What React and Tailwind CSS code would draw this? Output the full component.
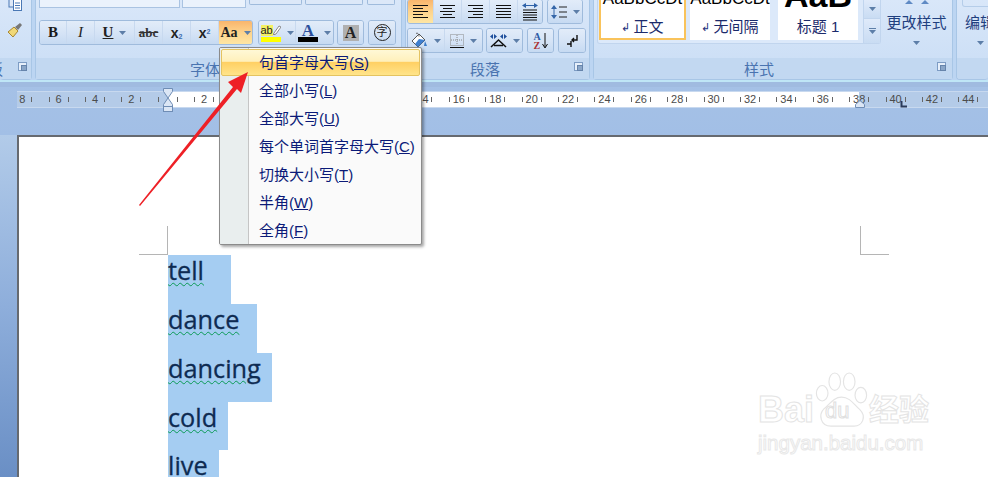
import React from "react";

const cjk = { fontFamily: '"Liberation Sans","Noto Sans CJK SC",sans-serif' };
const serif = { fontFamily: '"Liberation Serif",serif' };
const sans = { fontFamily: '"Liberation Sans",sans-serif' };
const groupBody = "bg-gradient-to-b from-[#d9e7f9] to-[#c9ddf5]";
const labelRow = "flex h-[21px] items-center justify-between bg-[#c2d8f1] text-[15px] text-[#4a74b0]";

const Caret = ({ className = "" }) => (
  <svg width="7" height="4" viewBox="0 0 7 4" className={`shrink-0 ${className}`}><path d="M0 0h7L3.500 4z" fill="#5d7ea8" /></svg>
);
const Launcher = () => (
  <svg width="9" height="9" viewBox="0 0 9 9" className="-mt-[4px] shrink-0">
    <rect x=".5" y=".5" width="8" height="8" fill="#e6effa" stroke="#7d9cc4" />
    <rect x="3.500" y="3.500" width="5" height="5" fill="#8aa6c8" stroke="#6684ab" />
  </svg>
);
const Seg = ({ w, hot, children, last }) => (
  <div
    className={`flex h-full items-center justify-center gap-[6px] ${hot ? "bg-gradient-to-b from-[#f9b56c] via-[#fdd38c] to-[#fee6a3]" : "bg-gradient-to-b from-[#e2ecf9] via-[#d6e4f6] to-[#c6daf2]"} ${last ? "" : "border-r border-[#c8d9ef]"}`}
    style={{ width: w }}
  >
    {children}
  </div>
);
const Group = ({ w, children, className = "" }) => (
  <div className={`flex h-[25px] shrink-0 overflow-hidden rounded-[3px] border border-[#9fbbdc] ${className}`} style={{ width: w }}>{children}</div>
);
const Lines = ({ kind }) => {
  const a = kind === "left" ? [0, 10] : kind === "right" ? [5, 15] : kind === "center" ? [3, 12] : [0, 15];
  return (
    <svg width="15" height="13" viewBox="0 0 15 13">
      {[0, 1, 2, 3, 4].map((i) => {
        const r = i % 2 ? a : [0, 15];
        return <path key={i} d={`M${r[0]} ${i * 3 + .5}H${r[1]}`} stroke="#111" />;
      })}
    </svg>
  );
};

const FontGroup = () => (
  <div className={`flex h-full w-[367px] shrink-0 flex-col rounded-b-[4px] border-x border-b border-[#a8c6e6] ${groupBody}`}>
    <div className="flex h-[58px] flex-col px-[2px]">
      <div className="flex h-[8px] pl-[1px]">
        <div className="h-full w-[141px] border border-t-0 border-[#a9c3e2] bg-[#eaf2fc]" />
        <div className="ml-[2px] h-full w-[64px] border border-t-0 border-[#a9c3e2] bg-[#eaf2fc]" />
        <div className="ml-[3px] h-[5px] w-[53px] rounded-b-[2px] border border-t-0 border-[#9fbbdc] bg-[#dce8f8]" />
        <div className="ml-[3px] h-[5px] w-[58px] rounded-b-[2px] border border-t-0 border-[#9fbbdc] bg-[#dce8f8]" />
        <div className="ml-[4px] h-[5px] w-[28px] rounded-b-[2px] border border-t-0 border-[#9fbbdc] bg-[#dce8f8]" />
      </div>
      <div className="mt-[12px] flex items-center pl-[1px]">
        <Group w={214}>
          <Seg w={27}><span className="text-[15px] font-bold leading-none text-[#1a1a1a]" style={serif}>B</span></Seg>
          <Seg w={28}><span className="text-[15px] italic leading-none text-[#222]" style={serif}>I</span></Seg>
          <Seg w={40}><span className="text-[15px] font-bold leading-none text-[#222] underline" style={serif}>U</span><Caret /></Seg>
          <Seg w={28}><span className="text-[13px] font-bold leading-none text-[#333] line-through" style={serif}>abc</span></Seg>
          <Seg w={28}><span className="text-[14px] font-bold leading-none text-[#222]" style={sans}>x<sub className="text-[7px] text-[#3b6db0]">2</sub></span></Seg>
          <Seg w={28}><span className="text-[14px] font-bold leading-none text-[#222]" style={sans}>x<sup className="text-[7px] text-[#3b6db0]">2</sup></span></Seg>
          <Seg w={33} hot last><span className="text-[14px] font-bold leading-none text-[#222]" style={serif}>Aa</span><Caret /></Seg>
        </Group>
        <Group w={76} className="ml-[5px]">
          <Seg w={38}>
            <div className="flex w-[20px] flex-col items-start">
              <div className="flex h-[13px] items-center">
                <span className="bg-[#f3f062] text-[11px] leading-[11px] text-[#222]" style={sans}>ab</span>
                <svg width="8" height="10" viewBox="0 0 8 10"><path d="M1 8l5-7 2 1-5 7-3 1z" fill="#fff" stroke="#8a8a8a" /></svg>
              </div>
              <div className="h-[5px] w-[20px] bg-[#ffff00]" />
            </div>
            <Caret />
          </Seg>
          <Seg w={38} last>
            <div className="flex flex-col items-center">
              <span className="h-[13px] text-[17px] font-bold leading-[14px] text-[#2c4f9c]" style={serif}>A</span>
              <div className="h-[5px] w-[20px] bg-black" />
            </div>
            <Caret />
          </Seg>
        </Group>
        <Group w={27} className="ml-[3px]"><Seg w={27} last><span className="flex h-[16px] w-[16px] items-center justify-center bg-[#b0b0b0] text-[16px] font-bold leading-none text-[#222]" style={serif}>A</span></Seg></Group>
        <Group w={28} className="ml-[4px]"><Seg w={28} last><span className="flex h-[17px] w-[17px] items-center justify-center rounded-full border border-[#222] text-[11px] leading-none text-[#222]" style={cjk}>字</span></Seg></Group>
      </div>
    </div>
    <div className={`${labelRow} pl-[154px] pr-[6px]`} style={cjk}>
      <span className="mt-[4px]">字体</span>
      <Launcher />
    </div>
  </div>
);

const ParaGroup = () => (
  <div className={`flex h-full w-[185px] shrink-0 flex-col rounded-b-[4px] border-x border-b border-[#a8c6e6] ${groupBody}`}>
    <div className="flex h-[58px] flex-col gap-[4px] pl-[1px]">
      <div className="-mt-[1px] flex h-[25px]">
        <Group w={136}>
          <Seg w={26} hot><Lines kind="left" /></Seg>
          <Seg w={28}><Lines kind="center" /></Seg>
          <Seg w={28}><Lines kind="right" /></Seg>
          <Seg w={28}><Lines kind="full" /></Seg>
          <Seg w={24} last>
            <svg width="16" height="18" viewBox="0 0 16 18"><path d="M1 2.500h14" stroke="#2f62a8" /><path d="M4 0v5L0 2.500zM12 0v5l4-2.500z" fill="#2f62a8" /><path d="M1 7h14M1 9.500h14M1 12h14M1 14.500h14M1 17h14" stroke="#111" /></svg>
          </Seg>
        </Group>
        <Group w={36} className="ml-[4px]">
          <Seg w={36} last>
            <svg width="16" height="16" viewBox="0 0 16 16"><path d="M3 2v12" stroke="#3566a8" /><path d="M0 5l3-4 3 4zM0 11l3 4 3-4z" fill="#3566a8" /><path d="M8 3h8M8 8h8M8 13h8" stroke="#222" /></svg>
            <Caret />
          </Seg>
        </Group>
      </div>
      <div className="flex h-[25px]">
        <Group w={76}>
          <Seg w={38}>
            <svg width="17" height="17" viewBox="0 0 17 17"><path d="M1 9l7-7 6 6-7 7z" fill="#fff" stroke="#555" /><path d="M5 1.500c2-1 3 1 3 3" fill="none" stroke="#555" /><path d="M8 7l6 1-7 7-3-3z" fill="#3f7fcf" /><path d="M14 9l2 5h-3z" fill="#3a7bc8" /></svg>
            <Caret />
          </Seg>
          <Seg w={38} last>
            <svg width="14" height="14" viewBox="0 0 14 14"><rect x=".5" y=".5" width="13" height="11" fill="none" stroke="#888" strokeDasharray="1 1" /><path d="M7 1v10M1 6h12" stroke="#888" strokeDasharray="1 1" /><path d="M0 13.500h14" stroke="#111" /></svg>
            <Caret />
          </Seg>
        </Group>
        <Group w={37} className="ml-[3px]">
          <Seg w={37} last>
            <svg width="17" height="14" viewBox="0 0 17 14"><path d="M1 13L8.500 6 16 13M4 11.500h9" fill="none" stroke="#111" strokeWidth="1.500" /><path d="M0 2.500L3 0v5zM17 2.500L14 0v5zM7 2.500L4 0v5zM10 2.500L13 0v5z" fill="#1f4f9c" /></svg>
            <Caret />
          </Seg>
        </Group>
        <Group w={27} className="ml-[4px]">
          <Seg w={27} last>
            <div className="flex items-center gap-[1px]">
              <span className="flex flex-col text-[10px] font-bold leading-[9px]" style={serif}><span className="text-[#2d5aa5]">A</span><span className="text-[#a33]">Z</span></span>
              <svg width="6" height="16" viewBox="0 0 6 16"><path d="M3 0v14M.5 11L3 15l2.500-4" fill="none" stroke="#111" /></svg>
            </div>
          </Seg>
        </Group>
        <Group w={28} className="ml-[4px]">
          <Seg w={28} last>
            <svg width="13" height="14" viewBox="0 0 13 14"><path d="M11 1v5H6M8 4L6 6l2 2M1 10h4v3M5 7v3" fill="none" stroke="#111" strokeWidth="1.400" /></svg>
          </Seg>
        </Group>
      </div>
    </div>
    <div className={`${labelRow} pl-[64px] pr-[6px]`} style={cjk}>
      <span className="mt-[4px]">段落</span>
      <Launcher />
    </div>
  </div>
);

const StyleCard = ({ w, active, sample, sampleClass, label, mark, style, big }) => (
  <div className={`flex h-[40px] shrink-0 flex-col items-center overflow-hidden bg-white ${active ? "border-2 border-t-0 border-[#f9c35b]" : ""}`} style={{ width: w }}>
    <div className={`flex shrink-0 items-end whitespace-nowrap leading-none ${big ? "h-[12px]" : "h-[7px]"} ${sampleClass}`} style={style}>{sample}</div>
    <div className={`flex items-center gap-[3px] whitespace-nowrap text-[15px] leading-[18px] text-[#1b2a6b] ${big ? "mt-[6px]" : "mt-[11px]"}`} style={cjk}>
      {mark && <span className="text-[11px] text-[#22307a]">↲</span>}
      <span>{label}</span>
    </div>
  </div>
);

const StyleGroup = () => (
  <div className={`flex h-full w-[360px] shrink-0 flex-col rounded-b-[4px] border-x border-b border-[#a8c6e6] ${groupBody}`}>
    <div className="flex h-[58px] pl-[3px]">
      <div className="flex h-[44px] w-[284px] shrink-0 rounded-b-[3px] border-x border-b border-[#c1d5ee] bg-[#dce9fa] pl-[1px]">
        <StyleCard w={87} active sample="AaBbCcDt" sampleClass="text-[17px]" style={sans} label="正文" mark />
        <div className="ml-[4px]"><StyleCard w={80} sample="AaBbCcDt" sampleClass="text-[17px]" style={sans} label="无间隔" mark /></div>
        <div className="ml-[8px]"><StyleCard w={80} big sample="AaB" sampleClass="text-[34px] font-bold" style={sans} label="标题 1" /></div>
        <div className="ml-auto flex flex-col">
          <div className="flex h-[19px] w-[17px] items-center justify-center border-l border-b border-[#c1d5ee] bg-gradient-to-b from-[#dfeafa] to-[#c9dcf3]"><Caret /></div>
          <div className="flex h-[24px] w-[17px] flex-col items-center justify-center gap-[1px] border-l border-[#c1d5ee] bg-gradient-to-b from-[#dfeafa] to-[#c9dcf3]"><div className="h-[1px] w-[7px] bg-[#5d7ea8]" /><Caret /></div>
        </div>
      </div>
      <div className="flex flex-1 flex-col items-center text-[15px] leading-[20px] text-[#1f3f7f]" style={cjk}>
        <div className="flex h-[13px] gap-[8px]">
          <svg width="8" height="4" viewBox="0 0 8 4"><path d="M4 0l4 4H0z" fill="#5f8ac4" /></svg>
          <svg width="8" height="4" viewBox="0 0 8 4"><path d="M4 0l4 4H0z" fill="#5f8ac4" /></svg>
        </div>
        <span className="whitespace-nowrap">更改样式</span>
        <Caret className="mt-[8px]" />
      </div>
    </div>
    <div className={`${labelRow} pl-[150px] pr-[6px]`} style={cjk}>
      <span className="mt-[4px]">样式</span>
      <Launcher />
    </div>
  </div>
);

const Ruler = () => {
  const marks = Array.from({ length: 27 }, (_, i) => Math.abs(i - 4) * 2);
  return (
    <div className="relative ml-[17px] mt-[4px] flex h-[17px] overflow-hidden border-y border-[#c8d9ef]">
      <div className="w-[151px] bg-[#b4cbe8]" />
      <div className="w-[691px] bg-white" />
      <div className="flex-1 bg-[#b4cbe8]" />
      <div className="absolute left-[-13px] top-0 flex h-full">
        {marks.map((n, i) => (
          <div key={i} className="flex h-full w-[36.4px] shrink-0 items-center justify-center gap-[5px] text-[11px] leading-none text-[#4b4b4b]" style={sans}>
            <span className="h-[5px] w-[1px] shrink-0 bg-[#666]" />
            <span className="flex w-[8px] justify-center whitespace-nowrap">{n === 0 ? "" : n}</span>
            <span className="h-[5px] w-[1px] shrink-0 bg-[#666]" />
          </div>
        ))}
      </div>
    </div>
  );
};

const Watermark = () => (
  <div className="absolute left-[758px] top-[372px] flex flex-col">
    <div className="flex items-end">
      <span className="text-[36px] font-bold leading-[36px] text-white [-webkit-text-stroke:1px_#e4e4e4]" style={sans}>Bai</span>
      <div className="relative ml-[1px] h-[56px] w-[53px]">
        <svg width="53" height="56" viewBox="0 0 54 58" className="absolute bottom-0 left-0">
          <g fill="#fff" stroke="#e4e4e4" strokeWidth="1.200">
            <ellipse cx="7" cy="22" rx="6" ry="8" />
            <ellipse cx="20" cy="10" rx="6" ry="9" />
            <ellipse cx="35" cy="10" rx="6" ry="9" />
            <ellipse cx="47" cy="24" rx="6" ry="8" />
            <path d="M27 26c-8 0-12 7-18 12-6 6-4 18 7 18h24c9 0 13-10 6-17-6-5-10-13-19-13z" />
          </g>
        </svg>
        <span className="absolute bottom-[5px] left-[10px] text-[22px] leading-[24px] text-white [-webkit-text-stroke:1px_#e0e0e0]" style={sans}>du</span>
      </div>
      <span className="ml-[1px] text-[30px] font-bold leading-[36px] text-white [-webkit-text-stroke:1px_#e4e4e4]" style={cjk}>经验</span>
    </div>
    <span className="mt-[4px] text-[20.500px] leading-[22px] text-white [-webkit-text-stroke:1px_#e8e8e8]" style={sans}>jingyan.baidu.com</span>
  </div>
);

const words = [["tell", 63, 49], ["dance", 89, 49], ["dancing", 104, 49], ["cold", 60, 48], ["live", 51, 48]];
const items = [["全部小写", "L"], ["全部大写", "U"], ["每个单词首字母大写", "C"], ["切换大小写", "T"], ["半角", "W"], ["全角", "F"]];

export default function App() {
  return (
    <div className="relative h-[477px] w-[988px] overflow-hidden bg-[#9ab8e0]">
      <div className="flex h-[82px] gap-[3px] border-b-2 border-[#bfe6f6] bg-[#bcd5f2]">
        <div className={`flex h-full w-[32px] shrink-0 flex-col rounded-b-[4px] border-r border-b border-[#a8c6e6] ${groupBody}`}>
          <div className="flex h-[58px] flex-col items-center gap-[10px] pr-[1px]">
            <svg width="15" height="15" viewBox="0 0 15 15" className="-mt-[3px]"><rect x="1" y="-3" width="8" height="13" fill="#dfe9f7" stroke="#4a78b5" /><rect x="5.500" y="2.500" width="8" height="11" fill="#fff" stroke="#4a78b5" /><path d="M7 6h5M7 8.500h5M7 11h5" stroke="#4a78b5" /></svg>
            <svg width="16" height="16" viewBox="0 0 16 16"><path d="M1 10l6-5 4 4-5 6z" fill="#f0d878" stroke="#a8862f" /><path d="M8 5l5-4 2 2-4 5z" fill="#777" /></svg>
          </div>
          <div className={`${labelRow} pr-[4px]`} style={cjk}>
            <span className="-ml-[12px] mt-[4px]">板</span>
            <Launcher />
          </div>
        </div>
        <FontGroup />
        <ParaGroup />
        <StyleGroup />
        <div className={`min-w-0 flex-1 overflow-hidden rounded-b-[4px] border-l border-b border-[#a8c6e6] ${groupBody}`}>
          <div className="flex h-[58px] flex-col items-start pl-[8px] text-[15px] leading-[20px] text-[#1f3f7f]" style={cjk}>
            <div className="ml-[-3px] mb-[6px] h-[7px] w-[40px] shrink-0 rounded-b-[3px] border border-t-0 border-[#b5cde9]" />
            <span className="whitespace-nowrap">编辑</span>
            <Caret className="ml-[12px] mt-[8px]" />
          </div>
          <div className="h-[21px] bg-[#c2d8f1]" />
        </div>
      </div>

      <div className="h-[53px] bg-gradient-to-b from-[#a5c1e6] to-[#a2bfe6]">
        <div className="h-[5px] bg-[#a0bbe0]" />
        <Ruler />
      </div>

      <div className="flex h-[342px]">
        <div className="w-[17px] bg-gradient-to-b from-[#b2cbe9] via-[#8eaedb] to-[#6a8fc5]" />
        <div className="relative flex-1 border-l-2 border-t-2 border-[#666a70] bg-white">
          <div className="flex h-[118px] items-end justify-between pl-[120px] pr-[99px]">
            <div className="h-[29px] w-[29px] border-b border-r border-[#b5b5b5]" />
            <div className="h-[29px] w-[29px] border-b border-l border-[#b5b5b5]" />
          </div>
          <div className="flex flex-col items-start pl-[149px]">
            {words.map(([w, wd, h]) => (
              <div key={w} className="flex shrink-0 items-start bg-[#a5cdf2] text-[25.300px] text-[#0e2b52] [-webkit-text-stroke:0.3px_#0e2b52]" style={{ width: wd, height: h, fontFamily: '"Open Sans",sans-serif', lineHeight: "30px" }}>
                <span className="underline decoration-[#0a9a55] decoration-wavy decoration-1 underline-offset-[2px]">{w}</span>
              </div>
            ))}
          </div>
        </div>
      </div>

      <svg width="12" height="26" viewBox="0 0 12 26" className="absolute left-[162px] top-[87px]">
        <path d="M1.500 1.500h9v3L6 11 1.500 4.500z" fill="#dbe6f5" stroke="#6f8db5" />
        <path d="M6 11l4.500 6.500v2.500h-9v-2.500z" fill="#dbe6f5" stroke="#6f8db5" />
        <rect x="1.500" y="19.500" width="9" height="5" fill="#dbe6f5" stroke="#6f8db5" />
      </svg>
      <svg width="10" height="8" viewBox="0 0 10 8" className="absolute left-[855px] top-[100px]"><path d="M.5 7.500v-3L5 .5l4.500 4v3z" fill="#dbe6f5" stroke="#6f8db5" /></svg>
      <svg width="7" height="7" viewBox="0 0 7 7" className="absolute left-[900px] top-[101px]"><path d="M1.500 0v5.500H7" fill="none" stroke="#2a3a5a" strokeWidth="2" /></svg>

      <div className="absolute left-[219px] top-[47px] h-[198px] w-[203px] overflow-hidden rounded-[2px] border border-[#8b8b8b] bg-[#fafafa] shadow-[2px_2px_3px_rgba(0,0,0,0.35)]" style={cjk}>
        <div className="flex h-full">
          <div className="w-[29px] border-r border-[#c5c5c5] bg-[#e9eeee]" />
        </div>
        <div className="absolute inset-0 flex flex-col px-[1px] pt-[1px] text-[15px] text-[#0b1a78]">
          <div className="flex h-[27px] shrink-0 items-center rounded-[2px] border border-[#e4c361] bg-[linear-gradient(#fff8d6,#fff0bb_45%,#ffd064_50%,#ffe48a)] pl-[37px] pt-[1px]">
            <span>句首字母大写(<span className="underline">S</span>)</span>
          </div>
          {items.map(([t, k]) => (
            <div key={k} className="flex h-[28px] shrink-0 items-center pl-[38px] pt-[2px]">
              <span>{t}(<span className="underline">{k}</span>)</span>
            </div>
          ))}
        </div>
      </div>

      <svg width="125" height="150" viewBox="0 0 125 150" className="absolute left-[130px] top-[60px]">
        <path d="M9 145L103 27 98 22 118 12 111 33 107 29 10 146z" fill="#ee2026" />
      </svg>

      <Watermark />
    </div>
  );
}
